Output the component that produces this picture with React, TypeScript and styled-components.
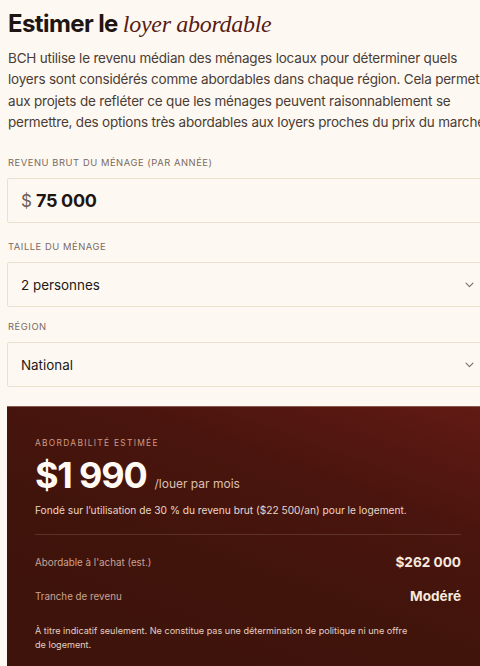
import styled, { createGlobalStyle } from 'styled-components'

const GlobalStyle = createGlobalStyle`
  html, body {
    margin: 0;
    padding: 0;
    background: #fdf9f2;
    overflow: hidden;
  }
  body {
    font-family: Inter, "Liberation Sans", sans-serif;
  }
`

const Chevron = () => (
  <svg width="9" height="6" viewBox="0 0 9 6" fill="none">
    <path d="M1 1.2L4.5 4.6L8 1.2" stroke="#7d6a5e" strokeWidth="1.1" strokeLinecap="round" strokeLinejoin="round" />
  </svg>
)

export default function App() {
  return (
    <>
      <GlobalStyle />
      <Page>
        <Ring />
        <Column>
          <Title>
            Estimer le <Accent>loyer abordable</Accent>
          </Title>
          <Intro>
            BCH utilise le revenu médian des ménages locaux pour déterminer quels loyers sont
            considérés comme abordables dans chaque région. Cela permet aux projets de refléter ce
            que les ménages peuvent raisonnablement se permettre, des options très abordables aux
            loyers proches du prix du marché.
          </Intro>

          <Field $gap={24}>
            <Label>Revenu brut du ménage (par année)</Label>
            <Box>
              <Currency>$</Currency>
              <Amount>75 000</Amount>
            </Box>
          </Field>

          <Field $gap={18}>
            <Label>Taille du ménage</Label>
            <Box>
              <Value>2 personnes</Value>
              <Chevron />
            </Box>
          </Field>

          <Field $gap={14}>
            <Label>Région</Label>
            <Box>
              <Value>National</Value>
              <Chevron />
            </Box>
          </Field>

          <Result>
            <Eyebrow>Abordabilité estimée</Eyebrow>
            <Headline>
              <Big>$1 990</Big>
              <Per>/louer par mois</Per>
            </Headline>
            <Note>Fondé sur l’utilisation de 30 % du revenu brut ($22 500/an) pour le logement.</Note>
            <Divider />
            <Row>
              <RowLabel>Abordable à l'achat (est.)</RowLabel>
              <RowValue>$262 000</RowValue>
            </Row>
            <Row>
              <RowLabel>Tranche de revenu</RowLabel>
              <RowValue>Modéré</RowValue>
            </Row>
            <Disclaimer>
              À titre indicatif seulement. Ne constitue pas une détermination de politique ni une offre
              de logement.
            </Disclaimer>
          </Result>
        </Column>
      </Page>
    </>
  )
}

const Page = styled.div`
  position: relative;
  width: 480px;
  height: 666px;
  overflow: hidden;
`

// faint decorative circle peeking in at the top right
const Ring = styled.div`
  position: absolute;
  top: -140px;
  right: -178px;
  width: 240px;
  height: 144px;
  border-radius: 50%;
  border: 1px solid #ecdcc4;
`

const Column = styled.div`
  width: 482px;
  padding: 9px 0 0 7px;
  display: flex;
  flex-direction: column;
`

const Title = styled.h1`
  margin: 0 0 0 1px;
  font-family: Inter, "Liberation Sans", sans-serif;
  font-size: 24px;
  font-weight: 700;
  line-height: 30px;
  letter-spacing: -0.6px;
  color: #1f1512;
`

const Accent = styled.em`
  font-family: "Liberation Serif", serif;
  font-style: italic;
  font-weight: 400;
  font-size: 24px;
  letter-spacing: -0.3px;
  color: #5a1b14;
`

const Intro = styled.p`
  margin: 9px 0 0 1px;
  font-size: 13.5px;
  line-height: 21.3px;
  letter-spacing: -0.2px;
  color: #4b3c35;
  width: 484px;
`

const Field = styled.div<{ $gap: number }>`
  display: flex;
  flex-direction: column;
  margin-top: ${(p) => p.$gap}px;
`

const Label = styled.div`
  margin-left: 1px;
  font-size: 9.4px;
  letter-spacing: 0.55px;
  text-transform: uppercase;
  color: #7b6a60;
  line-height: 12px;
`

const Box = styled.div`
  margin-top: 9px;
  height: 45px;
  box-sizing: border-box;
  border: 1.5px solid #ebe1cf;
  border-radius: 2px;
  display: flex;
  align-items: center;
  padding: 0 14px 0 13px;
  gap: 4px;
`

const Currency = styled.span`
  font-size: 17px;
  color: #6d5e56;
`

const Amount = styled.span`
  font-size: 18px;
  font-weight: 700;
  color: #1f1512;
  letter-spacing: -0.3px;
`

const Value = styled.span`
  flex: 1;
  font-size: 13.4px;
  color: #221815;
`

const Result = styled.section`
  margin-top: 19px;
  padding: 31px 28px 20px 28px;
  border-top: 1px solid #8a5a50;
  background: linear-gradient(200deg, #621a14 0%, #4a150e 30%, #40140b 60%, #3d130b 100%);
  color: #fff;
`

const Eyebrow = styled.div`
  font-size: 8.4px;
  letter-spacing: 1.3px;
  text-transform: uppercase;
  color: #cf9a86;
  line-height: 11px;
`

const Headline = styled.div`
  display: flex;
  align-items: baseline;
  gap: 8px;
  margin-top: 4px;
`

const Big = styled.span`
  font-size: 36px;
  font-weight: 700;
  letter-spacing: -1.2px;
  line-height: 44px;
  color: #fffaf4;
`

const Per = styled.span`
  font-size: 12px;
  color: #dcc0b2;
`

const Note = styled.p`
  margin: 6px 0 0;
  font-size: 10.2px;
  line-height: 14px;
  color: #ead6ca;
`

const Divider = styled.hr`
  margin: 17px 0 0;
  border: none;
  border-top: 1px solid rgba(255, 225, 210, 0.14);
`

const Row = styled.div`
  display: flex;
  justify-content: space-between;
  align-items: center;
  margin-top: 19px;
  & + & { margin-top: 18px; }
`

const RowLabel = styled.span`
  font-size: 9.8px;
  color: #caa394;
`

const RowValue = styled.span`
  font-size: 13.6px;
  font-weight: 700;
  color: #f6e9de;
`

const Disclaimer = styled.p`
  margin: 20px 0 0;
  width: 376px;
  font-size: 9.1px;
  line-height: 14px;
  color: #e3cfc3;
`
